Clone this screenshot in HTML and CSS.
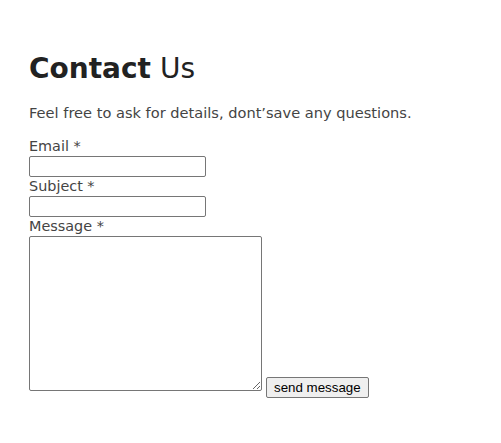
FILE: index.html
```html
<!DOCTYPE html>
<html>
<head>
<meta charset="utf-8">
<link rel="stylesheet" href="styles.css">
</head>
<body>
<main class="contact">
  <h1 class="title"><strong>Contact</strong> Us</h1>
  <p class="intro">Feel free to ask for details, dont’save any questions.</p>
  <form class="form">
    <label class="label" for="email">Email *</label>
    <input class="field" id="email" type="text">
    <label class="label" for="subject">Subject *</label>
    <input class="field" id="subject" type="text">
    <label class="label" for="message">Message *</label>
    <div class="send-row">
      <textarea class="message" id="message"></textarea>
      <button class="send" type="button">send message</button>
    </div>
  </form>
</main>
</body>
</html>
```

FILE: styles.css
```css
body {
  margin: 0;
  background: #fff;
}
.contact {
  padding: 50px 29px 40px;
  font-family: "DejaVu Sans", sans-serif;
}
.title {
  margin: 0;
  font-size: 28px;
  font-weight: 400;
  color: #222;
  line-height: 38px;
}
.title strong {
  font-weight: 700;
}
.intro {
  margin: 15px 0 14px;
  font-size: 14.6px;
  color: #444;
  line-height: 20px;
}
.form {
  display: block;
}
.label {
  display: block;
  font-size: 14.4px;
  color: #444;
  line-height: 19px;
}
.field {
  display: block;
  box-sizing: border-box;
  width: 177px;
  height: 21px;
  margin: 0;
  border: 1px solid #767676;
  border-radius: 2px;
  padding: 1px 2px;
}
.send-row {
  display: flex;
  align-items: flex-end;
  gap: 4px;
}
.message {
  box-sizing: border-box;
  width: 233px;
  height: 155px;
  margin: 0 0 7px;
  border: 1px solid #767676;
  border-radius: 2px;
}
.send {
  box-sizing: border-box;
  font-family: "Liberation Sans", Arial, sans-serif;
  font-size: 13.33px;
  line-height: 15px;
  color: #000;
  background: #efefef;
  border: 1px solid #767676;
  border-radius: 2px;
  padding: 2px 7px;
  height: 21px;
  margin: 0;
}
```
